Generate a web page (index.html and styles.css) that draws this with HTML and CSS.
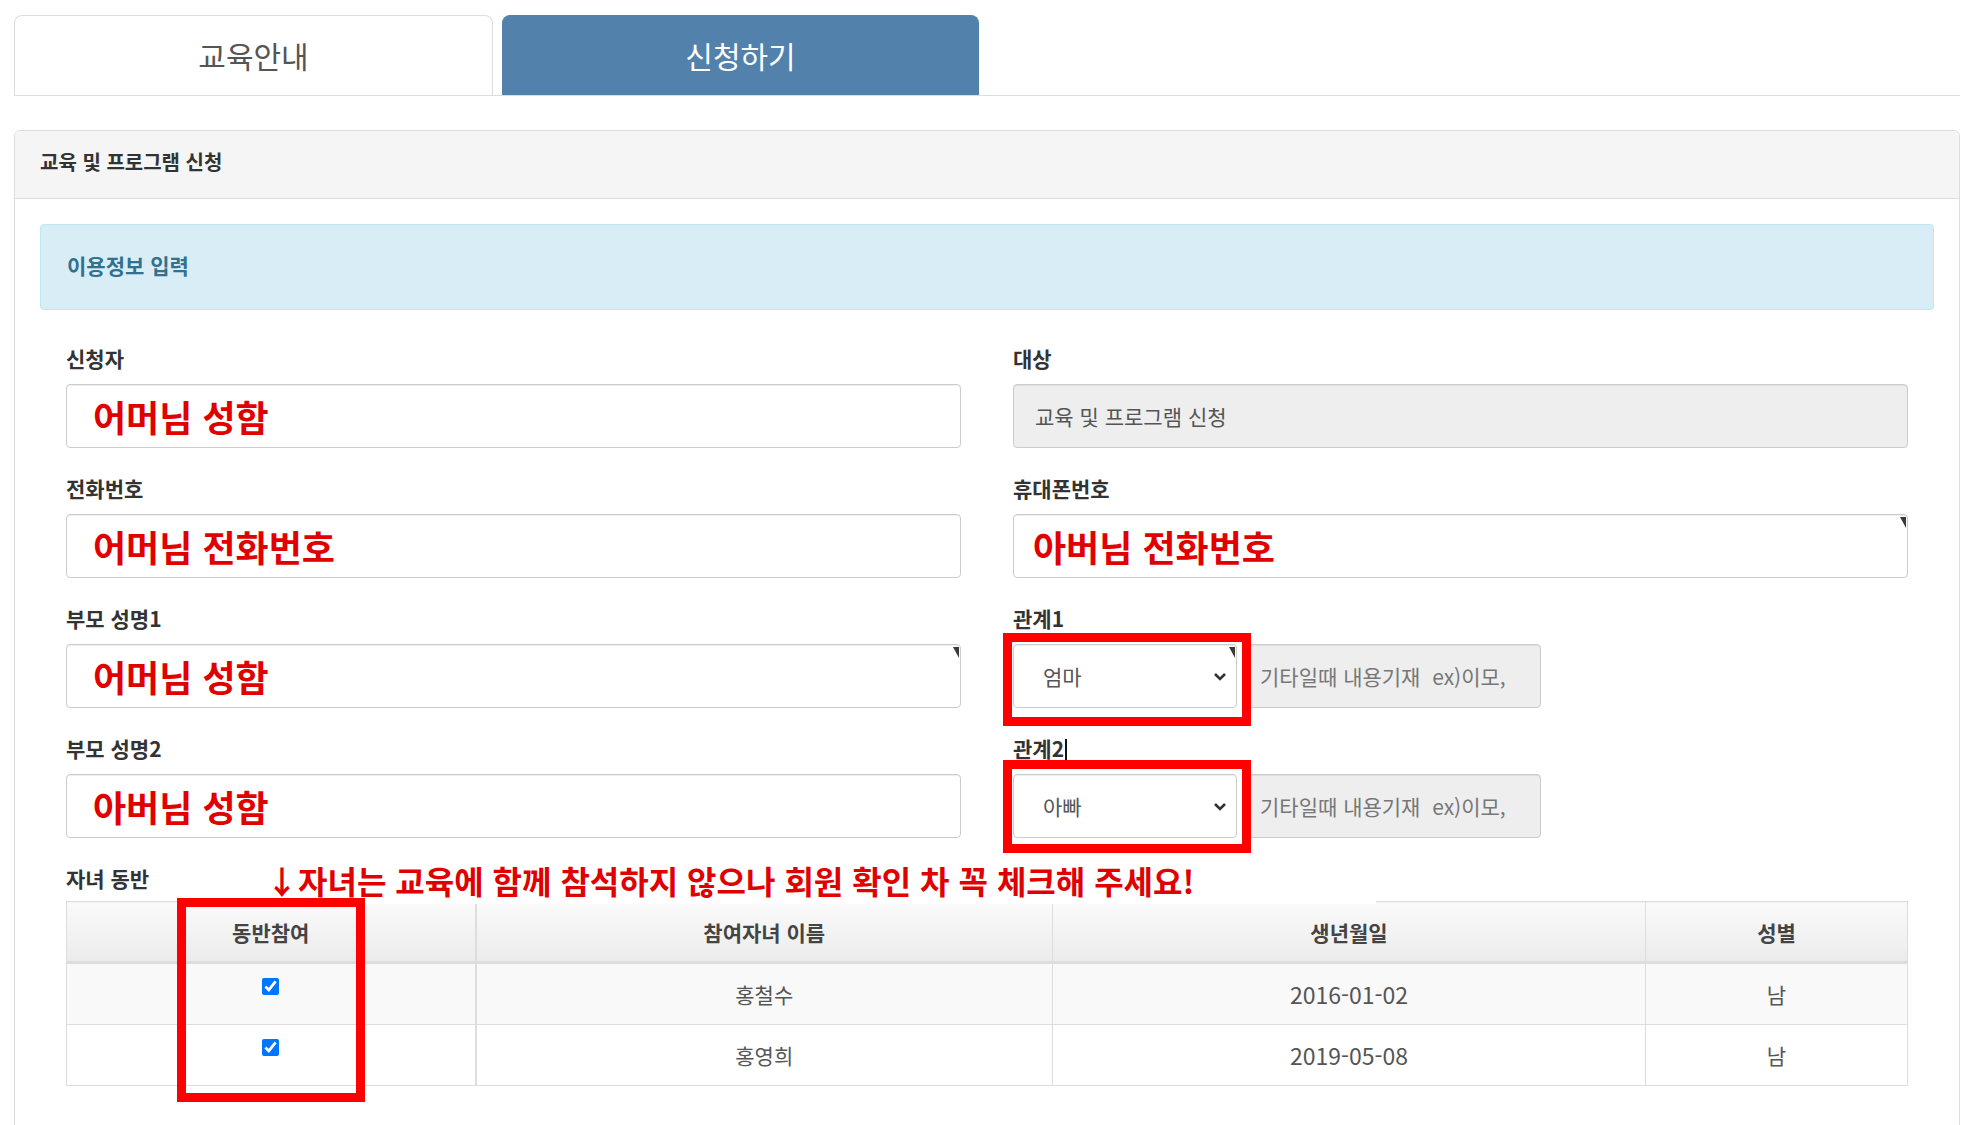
FILE: index.html
```html
<!DOCTYPE html>
<html lang="ko">
<head>
    <meta charset="UTF-8">
    <title>교육 및 프로그램 신청</title>
    <link rel="stylesheet" href="styles.css">
</head>
<body>
    <div class="page">
        <ul class="tabs">
            <li class="tab">교육안내</li>
            <li class="tab active">신청하기</li>
        </ul>

        <div class="panel">
            <div class="panel-head">교육 및 프로그램 신청</div>
            <div class="panel-body">
                <div class="alert">이용정보 입력</div>

                <div class="form">
                    <div class="grid">
                        <div class="group">
                            <label>신청자</label>
                            <div class="field">
                                <input class="input red" type="text" value="어머님 성함">
                            </div>
                        </div>
                        <div class="group">
                            <label>대상</label>
                            <div class="field">
                                <input class="input readonly" type="text" value="교육 및 프로그램 신청" readonly>
                            </div>
                        </div>

                        <div class="group">
                            <label>전화번호</label>
                            <div class="field">
                                <input class="input red" type="text" value="어머님 전화번호">
                            </div>
                        </div>
                        <div class="group">
                            <label>휴대폰번호</label>
                            <div class="field">
                                <input class="input red pad-sm" type="text" value="아버님 전화번호">
                                <span class="tick"></span>
                            </div>
                        </div>

                        <div class="group">
                            <label>부모 성명1</label>
                            <div class="field">
                                <input class="input red" type="text" value="어머님 성함">
                                <span class="tick"></span>
                            </div>
                        </div>
                        <div class="group">
                            <label>관계1</label>
                            <div class="rel">
                                <div class="select-wrap">
                                    <select class="select">
                                        <option>엄마</option>
                                        <option>아빠</option>
                                        <option>기타</option>
                                    </select>
                                    <svg class="chev" width="14" height="9" viewBox="0 0 14 9"><path d="M2 2l5 5 5-5" fill="none" stroke="#333" stroke-width="2.6"/></svg>
                                    <span class="tick"></span>
                                    <span class="hl"></span>
                                </div>
                                <input class="input etc" type="text" placeholder="기타일때 내용기재  ex)이모,">
                            </div>
                        </div>

                        <div class="group">
                            <label>부모 성명2</label>
                            <div class="field">
                                <input class="input red" type="text" value="아버님 성함">
                            </div>
                        </div>
                        <div class="group">
                            <label>관계2<span class="caret"></span></label>
                            <div class="rel">
                                <div class="select-wrap">
                                    <select class="select">
                                        <option>아빠</option>
                                        <option>엄마</option>
                                        <option>기타</option>
                                    </select>
                                    <svg class="chev" width="14" height="9" viewBox="0 0 14 9"><path d="M2 2l5 5 5-5" fill="none" stroke="#333" stroke-width="2.6"/></svg>
                                    <span class="hl hl-2"></span>
                                </div>
                                <input class="input etc" type="text" placeholder="기타일때 내용기재  ex)이모,">
                            </div>
                        </div>
                    </div>

                    <div class="kids">
                        <label>자녀 동반</label>
                        <div class="notice">↓자녀는 교육에 함께 참석하지 않으나 회원 확인 차 꼭 체크해 주세요!</div>
                        <table class="kids-table">
                            <colgroup>
                                <col style="width: 409px">
                                <col style="width: 577px">
                                <col style="width: 593px">
                                <col>
                            </colgroup>
                            <thead>
                                <tr>
                                    <th class="first">동반참여</th>
                                    <th>참여자녀 이름</th>
                                    <th>생년월일</th>
                                    <th>성별</th>
                                </tr>
                            </thead>
                            <tbody>
                                <tr class="odd">
                                    <td class="first"><input type="checkbox" checked></td>
                                    <td>홍철수</td>
                                    <td class="date">2016-01-02</td>
                                    <td>남</td>
                                </tr>
                                <tr>
                                    <td class="first"><input type="checkbox" checked></td>
                                    <td>홍영희</td>
                                    <td class="date">2019-05-08</td>
                                    <td>남</td>
                                </tr>
                            </tbody>
                        </table>
                        <span class="hl-col"></span>
                    </div>
                </div>
            </div>
        </div>
    </div>
</body>
</html>
```

FILE: styles.css
```css
body {
    margin: 0;
    font-family: "Noto Sans CJK KR", "Noto Sans", sans-serif;
    color: #333;
    background: #fff;
}
.page {
    padding: 15px 26px 0 14px;
}

/* tabs */
.tabs {
    display: flex;
    gap: 9px;
    list-style: none;
    margin: 0;
    padding: 0;
    border-bottom: 1px solid #ddd;
}
.tab {
    width: 479px;
    height: 80px;
    line-height: 78px;
    box-sizing: border-box;
    text-align: center;
    font-size: 30px;
    color: #555;
    background: #fff;
    border: 1px solid #ddd;
    border-bottom: none;
    border-radius: 8px 8px 0 0;
}
.tab.active {
    width: 477px;
    background: #5282ac;
    border-color: #5282ac;
    color: #fff;
}

/* panel */
.panel {
    margin-top: 34px;
    border: 1px solid #ddd;
    border-radius: 6px 6px 0 0;
}
.panel-head {
    height: 67px;
    line-height: 62px;
    padding: 0 25px;
    background: #f5f5f5;
    border-bottom: 1px solid #ddd;
    border-radius: 6px 6px 0 0;
    font-size: 20px;
    font-weight: 700;
    color: #333;
}
.panel-body {
    padding: 25px 25px 80px;
}
.alert {
    height: 86px;
    line-height: 81px;
    box-sizing: border-box;
    padding: 0 26px;
    background: #d9edf7;
    border: 1px solid #bce8f1;
    border-radius: 4px;
    color: #31708f;
    font-size: 21px;
    font-weight: 700;
}

/* form */
.form {
    padding: 35px 26px 0;
}
.grid {
    display: grid;
    grid-template-columns: 1fr 1fr;
    column-gap: 52px;
    row-gap: 27px;
}
.group label,
.kids label {
    display: block;
    font-size: 21px;
    line-height: 26px;
    margin-bottom: 13px;
    font-weight: 700;
    color: #333;
}
.caret {
    display: inline-block;
    width: 2px;
    height: 21px;
    margin-left: 1px;
    background: #111;
    vertical-align: -3px;
}
.field {
    position: relative;
}
.input {
    display: block;
    width: 100%;
    height: 64px;
    box-sizing: border-box;
    padding: 0 26px;
    border: 1px solid #ccc;
    border-radius: 4px;
    box-shadow: inset 0 1px 1px rgba(0,0,0,0.075);
    background: #fff;
    font-family: inherit;
    font-size: 21px;
    color: #555;
    outline: none;
}
.input.readonly {
    background: #eee;
    padding-left: 21px;
}
.input.red {
    color: #e00000;
    font-size: 36px;
    font-weight: 700;
}
.input.pad-sm {
    padding-left: 19px;
}
.tick {
    position: absolute;
    top: 3px;
    right: 2px;
    width: 0;
    height: 0;
    border-top: 11px solid #3a3a3a;
    border-left: 6px solid transparent;
}

/* relation selects */
.rel {
    display: flex;
    align-items: center;
}
.select-wrap {
    position: relative;
    width: 224px;
    flex: none;
}
.select {
    display: block;
    width: 100%;
    height: 64px;
    padding: 0 29px;
    border: 1px solid #ccc;
    border-radius: 4px;
    background: #fff;
    box-shadow: inset 0 1px 1px rgba(0,0,0,0.075);
    font-family: inherit;
    font-size: 21px;
    color: #555;
    appearance: none;
    -webkit-appearance: none;
    outline: none;
}
.chev {
    position: absolute;
    right: 10px;
    top: 28px;
    pointer-events: none;
}
.input.etc {
    width: 298px;
    margin-left: 6px;
    background: #eee;
    padding: 0 8px 0 16px;
    font-size: 21px;
}
.input.etc::placeholder {
    color: #777;
}
.hl {
    position: absolute;
    left: -10px;
    top: -11px;
    width: 248px;
    height: 93px;
    box-sizing: border-box;
    border: 9px solid #f00;
    z-index: 2;
}
.hl.hl-2 {
    top: -14px;
}

/* children table */
.kids {
    position: relative;
    margin-top: 27px;
}
.kids label {
    margin-bottom: 10px;
}
.notice {
    position: absolute;
    left: 200px;
    top: -8px;
    width: 1110px;
    height: 47px;
    line-height: 46px;
    background: #fff;
    color: #e00000;
    font-size: 32px;
    font-weight: 700;
    white-space: nowrap;
    z-index: 1;
}
.kids-table {
    width: 100%;
    border-collapse: collapse;
    table-layout: fixed;
    border: 1px solid #ddd;
}
.kids-table th {
    height: 57px;
    background: linear-gradient(#fafafa, #ebebeb);
    border: 1px solid #ddd;
    border-bottom: 3px solid #ddd;
    font-size: 21px;
    font-weight: 700;
    color: #444;
}
.kids-table td {
    height: 58px;
    border: 1px solid #ddd;
    text-align: center;
    font-size: 21px;
    color: #555;
}
.kids-table td.date {
    font-size: 23px;
}
.kids-table .first {
    border-right: 2px solid #ddd;
}
.kids-table tr.odd td {
    background: #f9f9f9;
}
.kids-table input[type="checkbox"] {
    width: 17px;
    height: 17px;
    margin: 0 0 16px;
    accent-color: #0075ff;
    vertical-align: middle;
}
.hl-col {
    position: absolute;
    left: 111px;
    top: 33px;
    width: 188px;
    height: 204px;
    box-sizing: border-box;
    border: 9px solid #f00;
    z-index: 2;
}
```
